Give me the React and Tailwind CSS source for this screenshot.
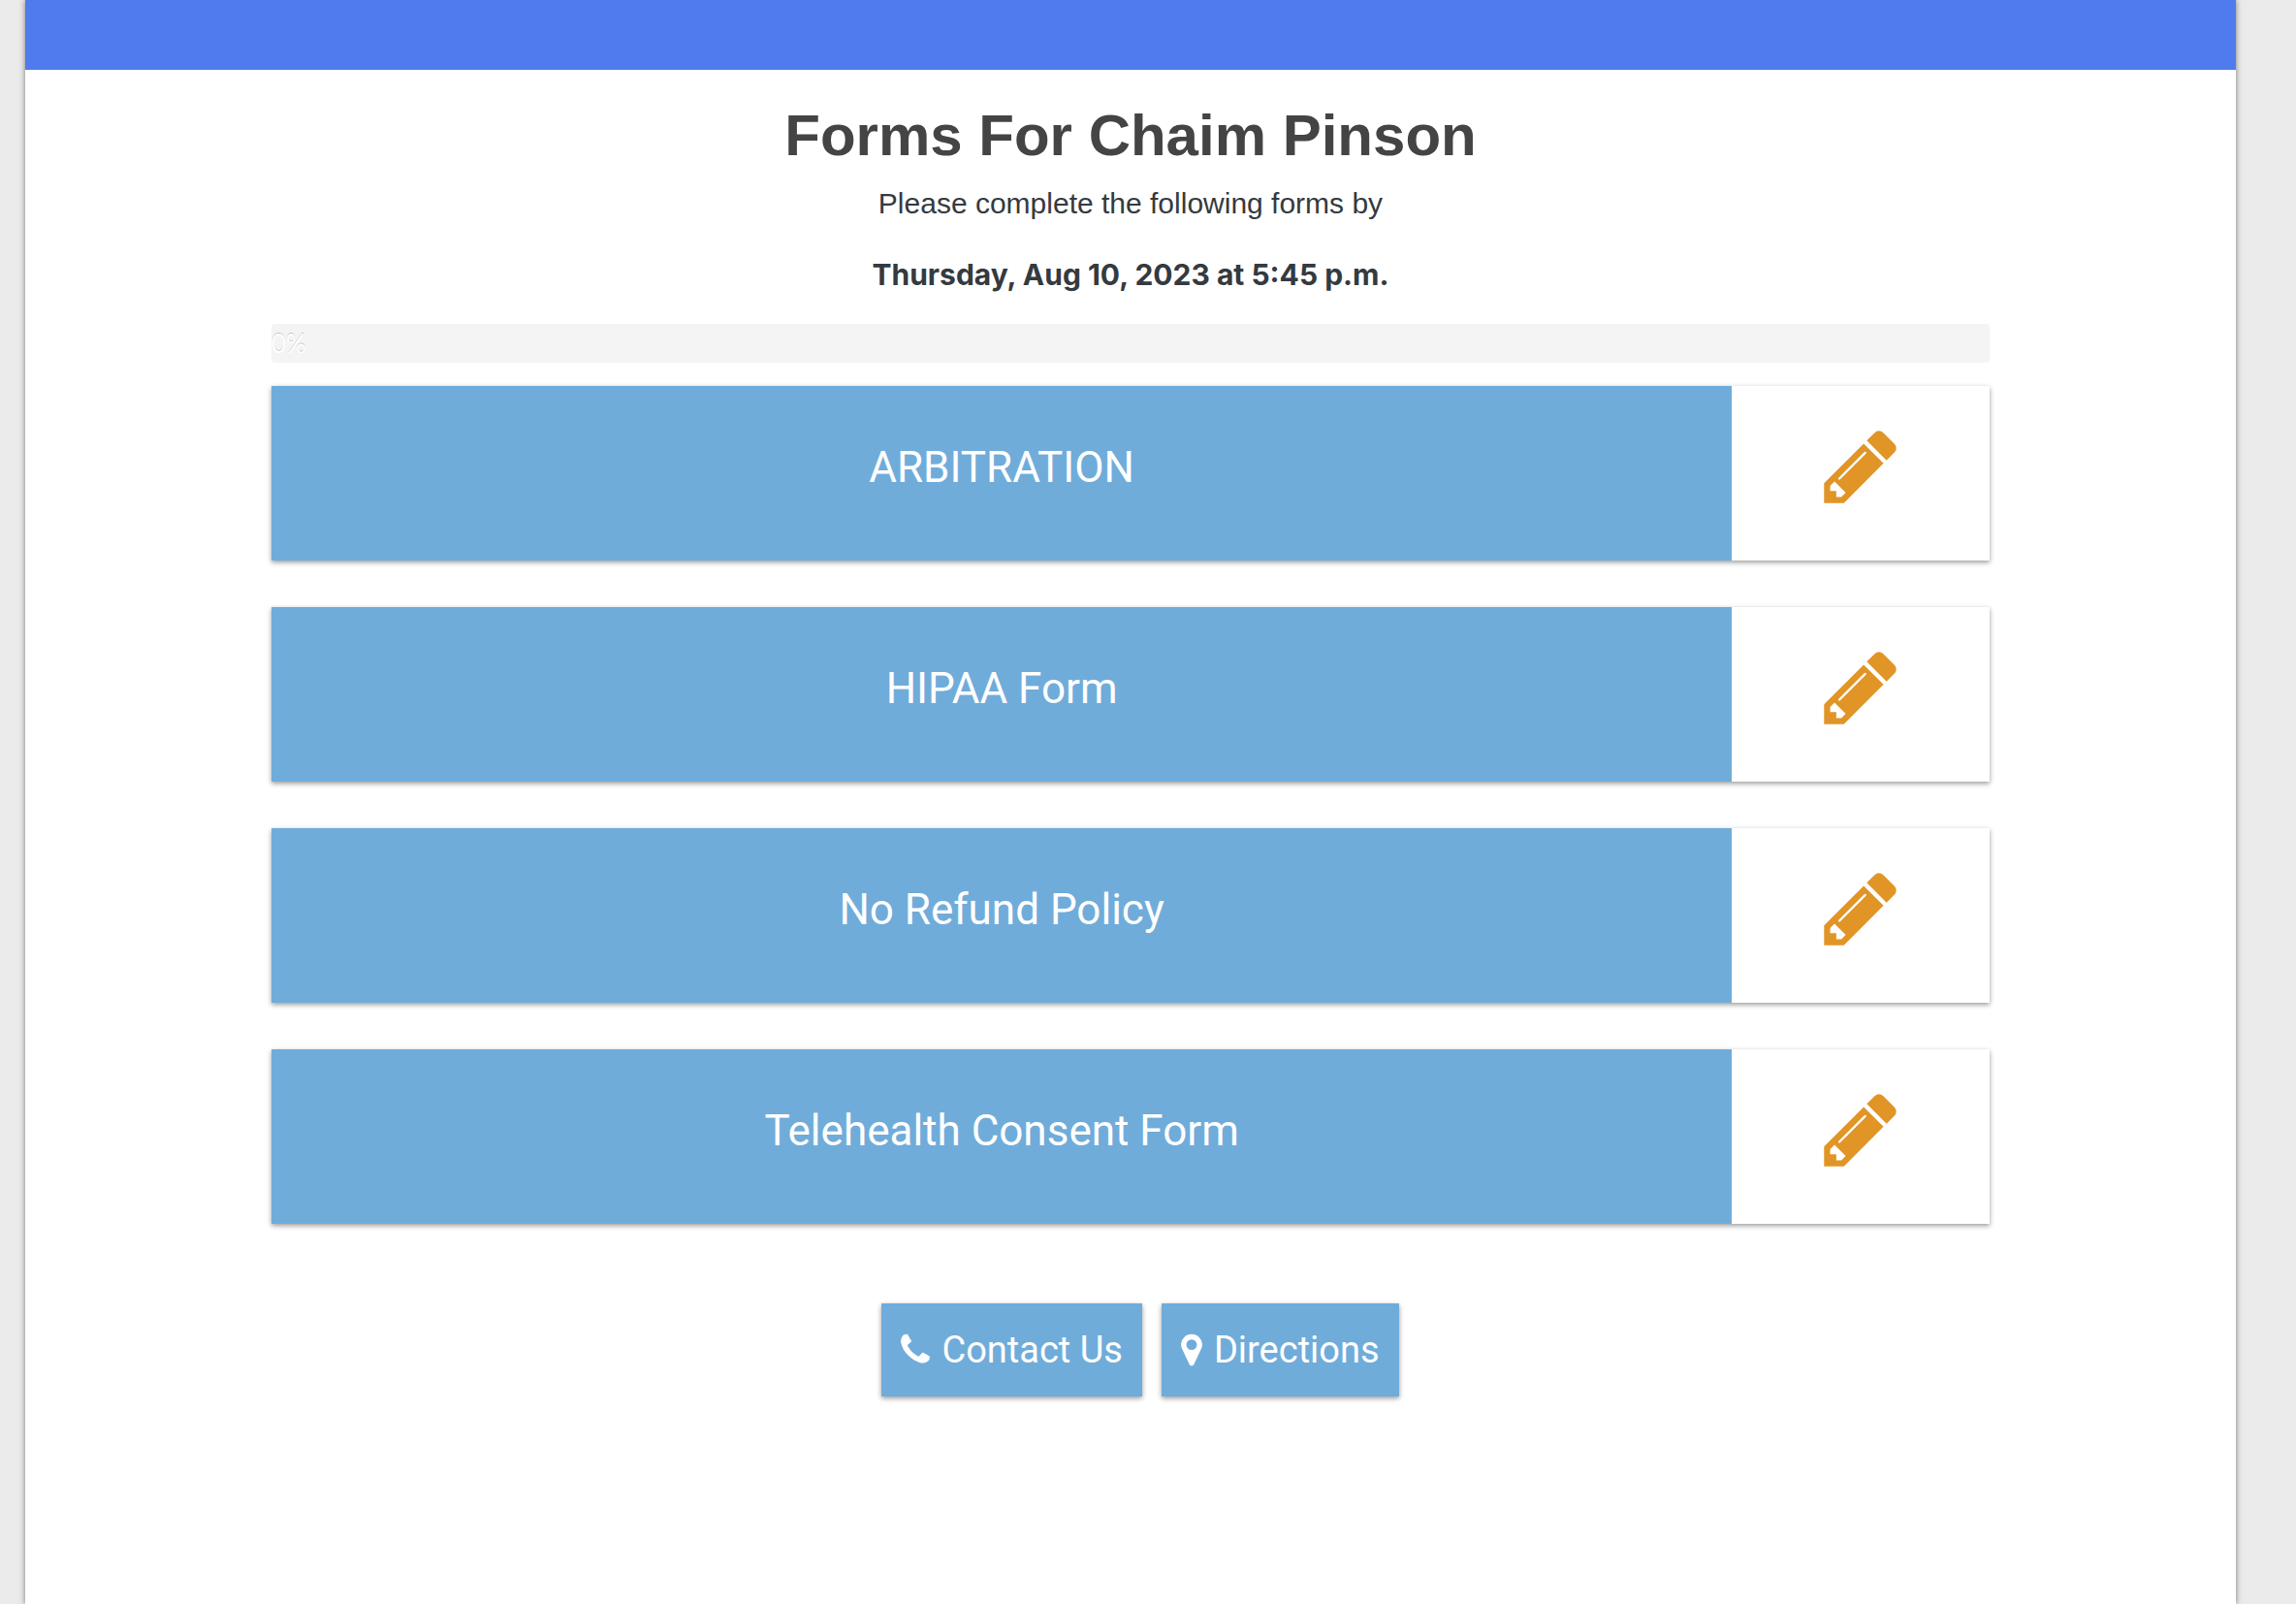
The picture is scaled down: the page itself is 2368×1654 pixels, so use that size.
const forms = [
  { id: 1, name: "ARBITRATION" },
  { id: 2, name: "HIPAA Form" },
  { id: 3, name: "No Refund Policy" },
  { id: 4, name: "Telehealth Consent Form" },
];

const PencilIcon = ({ className }) => (
  <svg viewBox="0 0 1792 1792" fill="currentColor" className={className} aria-hidden="true">
    <path d="M491 1536l91-91-235-235-91 91v107h128v128h107zm523-928q0-22-22-22-10 0-17 7l-542 542q-7 7-7 17 0 22 22 22 10 0 17-7l542-542q7-7 7-17zm-54-192l416 416-832 832h-416v-416zm683 96q0 53-37 90l-166 166-416-416 166-165q36-38 90-38 53 0 91 38l235 234q37 39 37 91z" />
  </svg>
);

const PhoneIcon = ({ className }) => (
  <svg viewBox="192 0 1408 1792" fill="currentColor" className={className} aria-hidden="true">
    <path d="M1600 1240q0 27-10 70.5t-21 68.5q-21 50-122 106-94 51-186 51-27 0-53-3.5t-57.5-12.5-47-14.5-55.5-20.5-49-18q-98-35-175-83-127-79-264-216t-216-264q-48-77-83-175-3-9-18-49t-20.5-55.5-14.5-47-12.5-57.5-3.5-53q0-92 51-186 56-101 106-122 25-11 68.5-21t70.5-10q14 0 21 3 18 6 53 76 11 19 30 54t35 63.5 31 53.5q3 4 17.5 25t21.5 35.5 7 28.5q0 20-28.5 50t-62 55-62 53-28.5 46q0 9 5 22.5t8.5 20.5 14 24 11.5 19q76 137 174 235t235 174q2 1 19 11.5t24 14 20.5 8.5 22.5 5q18 0 46-28.5t53-62 55-62 50-28.5q14 0 28.5 7t35.5 21.5 25 17.5q25 15 53.5 31t63.5 35 54 30q70 35 76 53 3 7 3 21z" />
  </svg>
);

const MarkerIcon = ({ className }) => (
  <svg viewBox="384 0 1024 1792" fill="currentColor" className={className} aria-hidden="true">
    <path d="M1152 640q0-106-75-181t-181-75-181 75-75 181 75 181 181 75 181-75 75-181zm256 0q0 109-33 179l-364 774q-16 33-47.5 52t-67.5 19-67.5-19-46.5-52l-365-774q-33-70-33-179 0-212 150-362t362-150 362 150 150 362z" />
  </svg>
);

const FormRow = ({ form }) => (
  <li>
    <button
      type="button"
      className="flex h-[180px] w-full cursor-pointer bg-white shadow-[0_2px_5px_rgba(0,0,0,0.4)]"
    >
      <span className="flex h-full w-[85%] items-center justify-center bg-[#70acda] pb-3 font-['Roboto',sans-serif] text-[44px] text-white">
        {form.name}
      </span>
      <span className="flex h-full flex-1 items-center justify-center pb-3.5">
        <PencilIcon className="size-[88px] text-[#e19526]" />
      </span>
    </button>
  </li>
);

const Progress = ({ value }) => (
  <div
    role="progressbar"
    aria-label="Forms completed"
    aria-valuenow={value}
    aria-valuemin={0}
    aria-valuemax={100}
    className="h-10 rounded bg-[#f4f4f4]"
  >
    <div
      className="h-full rounded bg-[#70acda] font-['Lato',sans-serif] text-[26px] leading-10 whitespace-nowrap text-white [text-shadow:0_-1px_0_rgba(0,0,0,0.2)]"
      style={{ width: `${value}%` }}
    >
      {value}%
    </div>
  </div>
);

const App = () => {
  return (
    <div className="min-h-screen bg-[#ebebeb] pr-[62px] pl-[26px] font-['Inter',sans-serif]">
      <div className="min-h-screen bg-white shadow-[0_0_6px_rgba(0,0,0,0.5)]">
        <header className="h-[72px] bg-[#4f7bee]" />

        <main className="px-[254px] pt-8 text-center text-[#343a40]">
          <h1 className="font-['Liberation_Sans',sans-serif] text-[60px] leading-[72px] font-bold text-[#444]">
            Forms For Chaim Pinson
          </h1>
          <p className="mt-3 font-['Liberation_Sans',sans-serif] text-[30px] leading-[44px]">
            Please complete the following forms by
          </p>
          <p className="my-[29px] text-[30px] leading-[44px] font-bold">
            Thursday, Aug 10, 2023 at 5:45 p.m.
          </p>

          <div className="text-left">
            <Progress value={0} />
          </div>

          <ul className="mt-6 flex flex-col gap-12">
            {forms.map((form) => (
              <FormRow key={form.id} form={form} />
            ))}
          </ul>

          <div className="mt-[82px] ml-5 flex justify-center gap-5 font-['Roboto',sans-serif] text-[38px] text-white">
            <button
              type="button"
              className="flex h-24 cursor-pointer items-center gap-3 bg-[#70acda] px-5 shadow-[0_2px_5px_rgba(0,0,0,0.4)]"
            >
              <PhoneIcon className="h-[38px] w-[30px]" />
              Contact Us
            </button>
            <button
              type="button"
              className="flex h-24 cursor-pointer items-center gap-3 bg-[#70acda] px-5 shadow-[0_2px_5px_rgba(0,0,0,0.4)]"
            >
              <MarkerIcon className="h-[38px] w-[22px]" />
              Directions
            </button>
          </div>
        </main>
      </div>
    </div>
  );
};

export default App;
